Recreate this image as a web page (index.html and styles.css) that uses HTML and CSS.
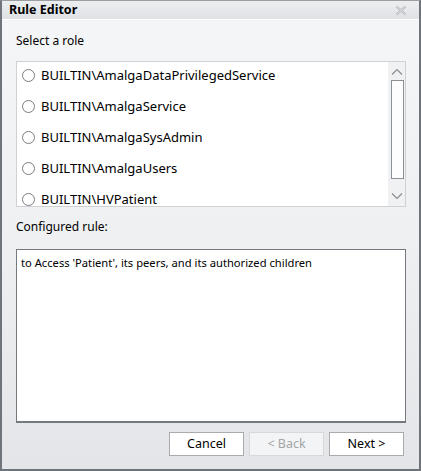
FILE: index.html
```html
<!DOCTYPE html>
<html>
<head>
<meta charset="utf-8">
<link rel="stylesheet" href="styles.css">
</head>
<body>
<div class="window">
  <div class="titlebar">
    <span class="title">Rule Editor</span>
    <svg class="close" width="12" height="11" viewBox="0 0 12 11">
      <path d="M1.5 1.5 L10.5 9.5 M10.5 1.5 L1.5 9.5" stroke="#b4b7bb" stroke-width="2.2" fill="none"/>
      <path d="M1.5 1.5 L10.5 9.5 M10.5 1.5 L1.5 9.5" stroke="#eef0f2" stroke-width="0.7" fill="none"/>
    </svg>
  </div>
  <div class="content">
    <div class="label first">Select a role</div>
    <div class="listbox">
      <div class="items">
        <div class="item"><span class="radio"></span><span>BUILTIN\AmalgaDataPrivilegedService</span></div>
        <div class="item"><span class="radio"></span><span>BUILTIN\AmalgaService</span></div>
        <div class="item"><span class="radio"></span><span>BUILTIN\AmalgaSysAdmin</span></div>
        <div class="item"><span class="radio"></span><span>BUILTIN\AmalgaUsers</span></div>
        <div class="item"><span class="radio"></span><span>BUILTIN\HVPatient</span></div>
      </div>
      <div class="scrollbar">
        <svg class="arrow" width="12" height="7" viewBox="0 0 12 7"><path d="M1 6.5 L6 1.5 L11 6.5" stroke="#8a8d91" stroke-width="1.2" fill="none"/></svg>
        <div class="thumb"></div>
        <svg class="arrow" width="12" height="7" viewBox="0 0 12 7"><path d="M1 0.5 L6 5.5 L11 0.5" stroke="#8a8d91" stroke-width="1.2" fill="none"/></svg>
      </div>
    </div>
    <div class="label second">Configured rule:</div>
    <div class="rulebox">to Access 'Patient', its peers, and its authorized children</div>
    <div class="buttons">
      <button class="btn">Cancel</button>
      <button class="btn disabled">&lt; Back</button>
      <button class="btn">Next &gt;</button>
    </div>
  </div>
</div>
</body>
</html>
```
FILE: styles.css
```css
html, body {
  margin: 0;
  padding: 0;
  background: #ffffff;
}
.window {
  width: 421px;
  height: 471px;
  box-sizing: border-box;
  border: 2px solid #6f747a;
  border-top: 1px solid #9a9ea3;
  background: linear-gradient(#f5f6f7 0%, #eef0f2 50%, #e3e5e8 100%);
  display: flex;
  flex-direction: column;
  font-family: "Noto Sans", "Open Sans", sans-serif;
  color: #000;
}
.titlebar {
  height: 19px;
  flex: none;
  box-sizing: border-box;
  background: linear-gradient(#eceef0, #dfe2e5);
  border-bottom: 1px solid #ffffff;
  display: flex;
  align-items: center;
  justify-content: space-between;
  padding: 0 12px 0 7px;
}
.title {
  font-weight: bold;
  font-size: 12.5px;
  line-height: 16px;
}
.close {
  display: block;
}
.content {
  flex: 1;
  display: flex;
  flex-direction: column;
  padding: 0 13px 0 14px;
}
.label {
  font-size: 12px;
  line-height: 16px;
}
.label.first {
  margin-top: 13px;
  margin-bottom: 12px;
}
.label.second {
  margin-top: 12px;
  margin-bottom: 14px;
}
.listbox {
  height: 146px;
  box-sizing: border-box;
  border: 1px solid #cfd1d4;
  background: #ffffff;
  display: flex;
  overflow: hidden;
}
.items {
  flex: 1;
  overflow: hidden;
}
.item {
  height: 31px;
  box-sizing: border-box;
  padding: 4px 0 0 5px;
  display: flex;
  align-items: flex-start;
  font-size: 13px;
  line-height: 18px;
}
.radio {
  width: 11px;
  height: 11px;
  border: 1px solid #7a7d80;
  border-radius: 50%;
  background: #fff;
  margin-top: 3px;
  margin-right: 6px;
  flex: none;
}
.scrollbar {
  width: 17px;
  flex: none;
  background: #f0f1f2;
  display: flex;
  flex-direction: column;
  align-items: center;
  padding-top: 6px;
  box-sizing: border-box;
}
.arrow {
  display: block;
  flex: none;
}
.thumb {
  width: 11px;
  height: 97px;
  border: 1px solid #8c8f93;
  background: #fdfdfd;
  margin: 5px 0 14px 1px;
  flex: none;
}
.rulebox {
  height: 174px;
  box-sizing: border-box;
  border: 1px solid #75797e;
  border-bottom-width: 2px;
  background: #ffffff;
  padding: 5px 4px;
  font-size: 11.2px;
  line-height: 16px;
}
.buttons {
  display: flex;
  justify-content: flex-end;
  gap: 5px;
  margin-top: 9px;
  padding-right: 2px;
}
.btn {
  width: 75px;
  height: 24px;
  box-sizing: border-box;
  background: #ffffff;
  border: 1px solid #a9abae;
  font-family: "Noto Sans", "Open Sans", sans-serif;
  font-size: 12.5px;
  color: #000;
  padding: 0;
  line-height: 20px;
}
.btn.disabled {
  background: #f3f4f5;
  border-color: #d6d8db;
  color: #a2a4a7;
}
```
